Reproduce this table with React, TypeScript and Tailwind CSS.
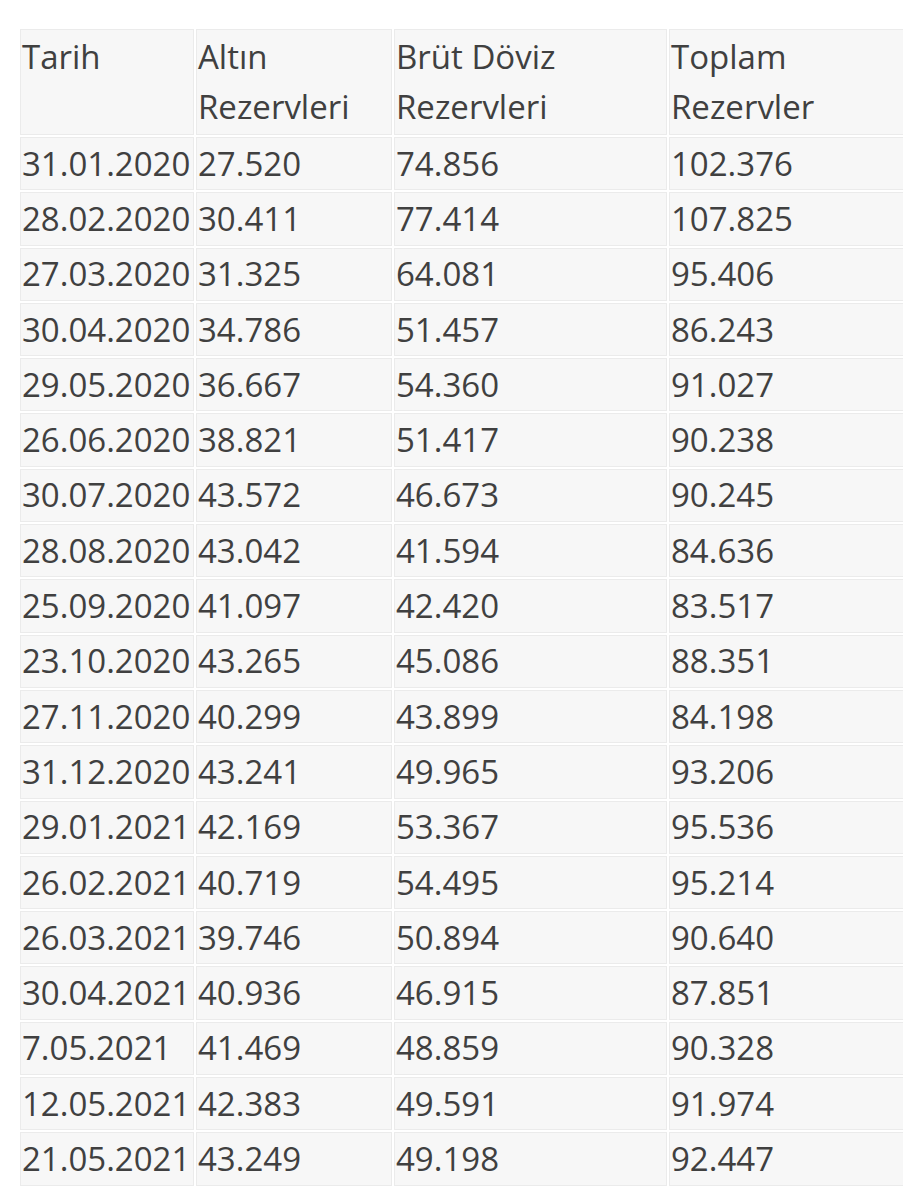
import React from "react";

const rows: [string, string, string, string][] = [
  ["31.01.2020", "27.520", "74.856", "102.376"],
  ["28.02.2020", "30.411", "77.414", "107.825"],
  ["27.03.2020", "31.325", "64.081", "95.406"],
  ["30.04.2020", "34.786", "51.457", "86.243"],
  ["29.05.2020", "36.667", "54.360", "91.027"],
  ["26.06.2020", "38.821", "51.417", "90.238"],
  ["30.07.2020", "43.572", "46.673", "90.245"],
  ["28.08.2020", "43.042", "41.594", "84.636"],
  ["25.09.2020", "41.097", "42.420", "83.517"],
  ["23.10.2020", "43.265", "45.086", "88.351"],
  ["27.11.2020", "40.299", "43.899", "84.198"],
  ["31.12.2020", "43.241", "49.965", "93.206"],
  ["29.01.2021", "42.169", "53.367", "95.536"],
  ["26.02.2021", "40.719", "54.495", "95.214"],
  ["26.03.2021", "39.746", "50.894", "90.640"],
  ["30.04.2021", "40.936", "46.915", "87.851"],
  ["7.05.2021", "41.469", "48.859", "90.328"],
  ["12.05.2021", "42.383", "49.591", "91.974"],
  ["21.05.2021", "43.249", "49.198", "92.447"],
];

const cell =
  "bg-[#f7f7f7] border border-[#ebebeb] pl-[1px] pr-0 whitespace-nowrap overflow-visible";

export default function App() {
  return (
    <div className="w-[903px] h-[1200px] overflow-hidden bg-white pt-[27px] pl-[18px] font-['Open_Sans',sans-serif] text-[33px] leading-[50px] text-[#404040]">
      <table className="table-fixed border-separate border-spacing-[2px] w-[933px]">
        <colgroup>
          <col className="w-[174px]" />
          <col className="w-[196px]" />
          <col className="w-[273px]" />
          <col className="w-[280px]" />
        </colgroup>
        <thead>
          <tr>
            <th className={`${cell} h-[106px] align-top pt-[2px] text-left font-normal`}>Tarih</th>
            <th className={`${cell} h-[106px] align-top pt-[2px] text-left font-normal`}>
              Altın
              <br />
              Rezervleri
            </th>
            <th className={`${cell} h-[106px] align-top pt-[2px] text-left font-normal`}>
              Brüt Döviz
              <br />
              Rezervleri
            </th>
            <th className={`${cell} h-[106px] align-top pt-[2px] text-left font-normal`}>
              Toplam
              <br />
              Rezervler
            </th>
          </tr>
        </thead>
        <tbody>
          {rows.map((r) => (
            <tr key={r[0]}>
              {r.map((v, i) => (
                <td key={i} className={`${cell} h-[53.3px] align-middle`}>
                  {v}
                </td>
              ))}
            </tr>
          ))}
        </tbody>
      </table>
    </div>
  );
}
